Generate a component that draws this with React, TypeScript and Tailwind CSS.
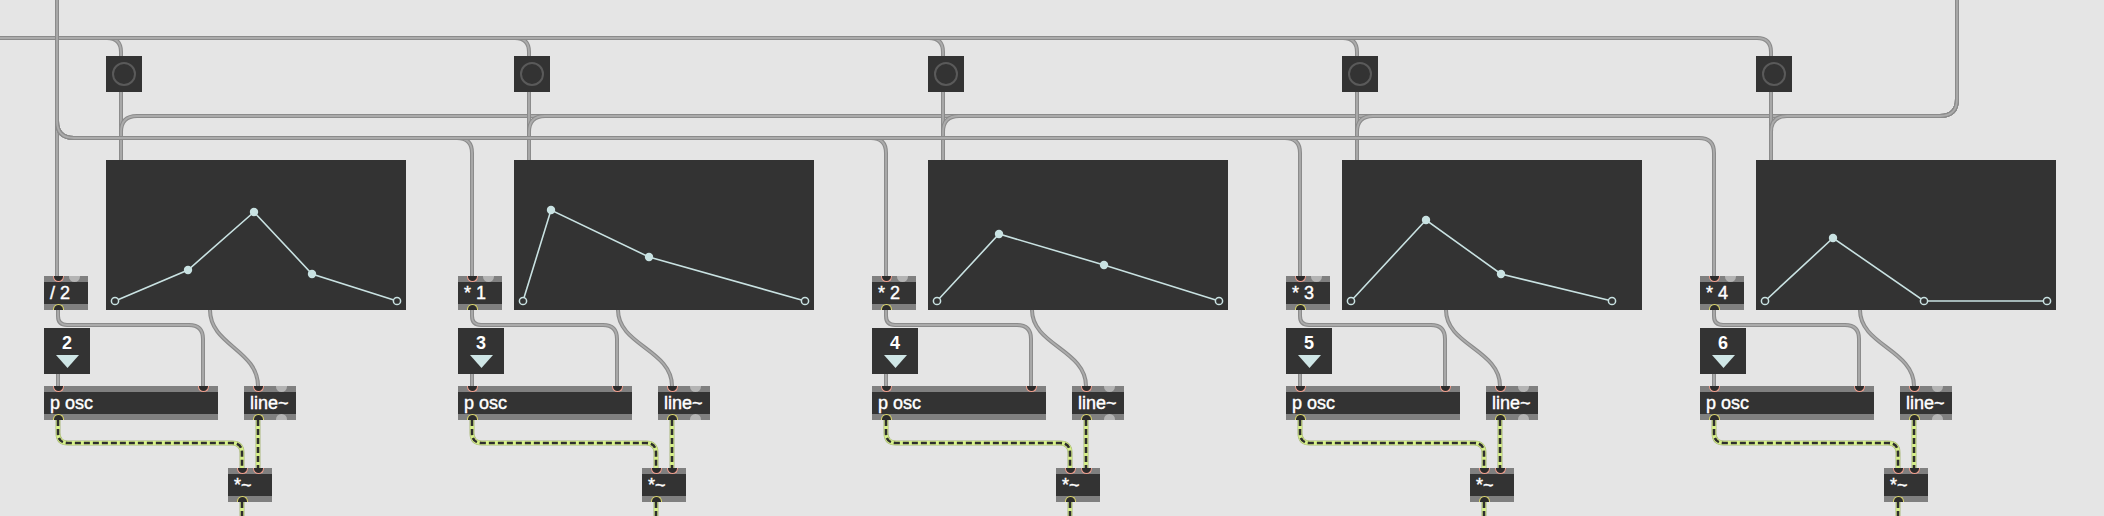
import React from 'react';

type Pt = [number, number, boolean];

type Column = {
  U: number; // upper group x (button + function)
  L: number; // lower group x (op, number, p osc, line~, *~)
  op: string;
  num: string;
  pts: Pt[];
};

const columns: Column[] = [
  { U: 106, L: 44, op: '/ 2', num: '2', pts: [[9, 141, false], [82, 110, true], [148, 52, true], [206, 114, true], [291, 141, false]] },
  { U: 514, L: 458, op: '* 1', num: '3', pts: [[9, 141, false], [37, 50, true], [135, 97, true], [291, 141, false]] },
  { U: 928, L: 872, op: '* 2', num: '4', pts: [[9, 141, false], [71, 74, true], [176, 105, true], [291, 141, false]] },
  { U: 1342, L: 1286, op: '* 3', num: '5', pts: [[9, 141, false], [84, 60, true], [159, 114, true], [270, 141, false]] },
  { U: 1756, L: 1700, op: '* 4', num: '6', pts: [[9, 141, false], [77, 78, true], [168, 141, false], [291, 141, false]] },
];

type Port = { dx: number; on: boolean };

const Inlet = ({ dx, on }: Port) => (
  <div
    className={
      on
        ? 'absolute top-0 w-[11px] h-[6px] rounded-b-full bg-[#2c2c2c] border-[1.5px] border-t-0 border-[#ef9d8c]'
        : 'absolute top-0 w-[11px] h-[6px] rounded-b-full bg-[#b4b4b4]'
    }
    style={{ left: dx - 5.5 }}
  />
);

const Outlet = ({ dx, on }: Port) => (
  <div
    className={
      on
        ? 'absolute bottom-0 w-[11px] h-[6px] rounded-t-full bg-[#2c2c2c] border-[1.5px] border-b-0 border-[#dcd768]'
        : 'absolute bottom-0 w-[11px] h-[6px] rounded-t-full bg-[#b4b4b4]'
    }
    style={{ left: dx - 5.5 }}
  />
);

const MaxBox = ({
  x,
  y,
  w,
  text,
  inlets,
  outlets,
}: {
  x: number;
  y: number;
  w: number;
  text: string;
  inlets: Port[];
  outlets: Port[];
}) => (
  <div className="absolute h-[34px] flex flex-col" style={{ left: x, top: y, width: w }}>
    <div className="h-[6px] bg-[#808080]" />
    <div className="h-[22px] bg-[#333333] px-[6px] text-[18px] leading-[22px] text-white whitespace-nowrap [-webkit-text-stroke:0.4px_white]">
      {text}
    </div>
    <div className="h-[6px] bg-[#808080]" />
    {inlets.map((p, i) => (
      <Inlet key={'i' + i} {...p} />
    ))}
    {outlets.map((p, i) => (
      <Outlet key={'o' + i} {...p} />
    ))}
  </div>
);

const NumberBox = ({ x, y, value }: { x: number; y: number; value: string }) => (
  <div
    className="absolute w-[46px] h-[46px] bg-[#333333] flex flex-col items-center pt-[6px]"
    style={{ left: x, top: y }}
  >
    <span className="text-[18px] leading-[18px] font-bold text-white">{value}</span>
    <svg width="23" height="13" className="mt-[3px]">
      <polygon points="0,0 23,0 11.5,13" fill="#cfe6e6" />
    </svg>
  </div>
);

const Bang = ({ x }: { x: number }) => (
  <div className="absolute top-[56px] w-[36px] h-[36px] bg-[#333333]" style={{ left: x }}>
    <svg width="36" height="36">
      <circle cx="18" cy="18" r="11" fill="none" stroke="#5a5a5a" strokeWidth="2" />
    </svg>
  </div>
);

const FunctionBox = ({ x, pts }: { x: number; pts: Pt[] }) => (
  <div className="absolute top-[160px] w-[300px] h-[150px] bg-[#333333]" style={{ left: x }}>
    <svg width="300" height="150">
      <polyline
        points={pts.map((p) => `${p[0]},${p[1]}`).join(' ')}
        fill="none"
        stroke="#c9e2e2"
        strokeWidth="1.6"
      />
      {pts.map((p, i) =>
        p[2] ? (
          <circle key={i} cx={p[0]} cy={p[1]} r="4.2" fill="#c9e2e2" />
        ) : (
          <circle key={i} cx={p[0]} cy={p[1]} r="3.6" fill="#333333" stroke="#c9e2e2" strokeWidth="1.5" />
        )
      )}
    </svg>
  </div>
);

const Cord = ({ d }: { d: string }) => (
  <g fill="none" strokeLinecap="round" strokeLinejoin="round">
    <path d={d} stroke="#8b8b8b" strokeWidth="4" />
    <path d={d} stroke="#ababab" strokeWidth="1.8" />
  </g>
);

const SignalCord = ({ d }: { d: string }) => (
  <g fill="none">
    <path d={d} stroke="#a9b77a" strokeWidth="5" />
    <path d={d} stroke="#d6ef8a" strokeWidth="3.8" />
    <path d={d} stroke="#2e2e2e" strokeWidth="2.6" strokeDasharray="6 3" />
  </g>
);

export default function App() {
  const cords: string[] = [];
  const signals: string[] = [];

  columns.forEach((c, i) => {
    const B = c.U + 15;
    const opIn = c.L + 14;

    // trigger along the top into each bang
    cords.push(`M0 38 H${B - 14} Q${B} 38 ${B} 52 V56`);
    // bang -> function
    cords.push(`M${B} 92 V160`);
    // right-hand source down into every function
    cords.push(`M1957 0 V99 Q1957 116 1940 116 H${B + 16} Q${B} 116 ${B} 132 V160`);

    // left source into the op boxes
    if (i === 0) {
      cords.push(`M57 0 V276`);
    } else {
      cords.push(`M57 0 V121 Q57 138 74 138 H${opIn - 15} Q${opIn} 138 ${opIn} 153 V276`);
    }

    // op -> p osc right inlet
    cords.push(
      `M${opIn} 310 V316 Q${opIn} 325 ${opIn + 9} 325 H${c.L + 145} Q${c.L + 159} 325 ${c.L + 159} 339 V386`
    );
    // number -> p osc
    cords.push(`M${opIn} 374 V386`);
    // function -> line~
    const fx = c.U + 104;
    const lx = c.L + 214;
    cords.push(`M${fx} 310 C${fx} 345 ${lx} 350 ${lx} 386`);

    // signal cords
    const mx = c.L + 198;
    signals.push(`M${opIn} 420 V433 Q${opIn} 443 ${opIn + 10} 443 H${mx - 10} Q${mx} 443 ${mx} 453 V468`);
    signals.push(`M${lx} 420 V468`);
    signals.push(`M${mx} 502 V518`);
  });

  return (
    <div className="relative w-[2104px] h-[516px] overflow-hidden bg-[#e5e5e5] font-['Liberation_Sans',Arial,sans-serif]">
      <svg className="absolute inset-0" width="2104" height="516">
        {cords.map((d, i) => (
          <Cord key={i} d={d} />
        ))}
        {signals.map((d, i) => (
          <SignalCord key={i} d={d} />
        ))}
      </svg>

      {columns.map((c) => (
        <React.Fragment key={c.L}>
          <Bang x={c.U} />
          <FunctionBox x={c.U} pts={c.pts} />
          <MaxBox
            x={c.L}
            y={276}
            w={44}
            text={c.op}
            inlets={[{ dx: 14, on: true }, { dx: 30, on: false }]}
            outlets={[{ dx: 14, on: true }]}
          />
          <NumberBox x={c.L} y={328} value={c.num} />
          <MaxBox
            x={c.L}
            y={386}
            w={174}
            text="p osc"
            inlets={[{ dx: 14, on: true }, { dx: 159, on: true }]}
            outlets={[{ dx: 14, on: true }]}
          />
          <MaxBox
            x={c.L + 200}
            y={386}
            w={52}
            text="line~"
            inlets={[{ dx: 14, on: true }, { dx: 37, on: false }]}
            outlets={[{ dx: 14, on: true }, { dx: 37, on: false }]}
          />
          <MaxBox
            x={c.L + 184}
            y={468}
            w={44}
            text="*~"
            inlets={[{ dx: 14, on: true }, { dx: 30, on: true }]}
            outlets={[{ dx: 14, on: true }]}
          />
        </React.Fragment>
      ))}
    </div>
  );
}
